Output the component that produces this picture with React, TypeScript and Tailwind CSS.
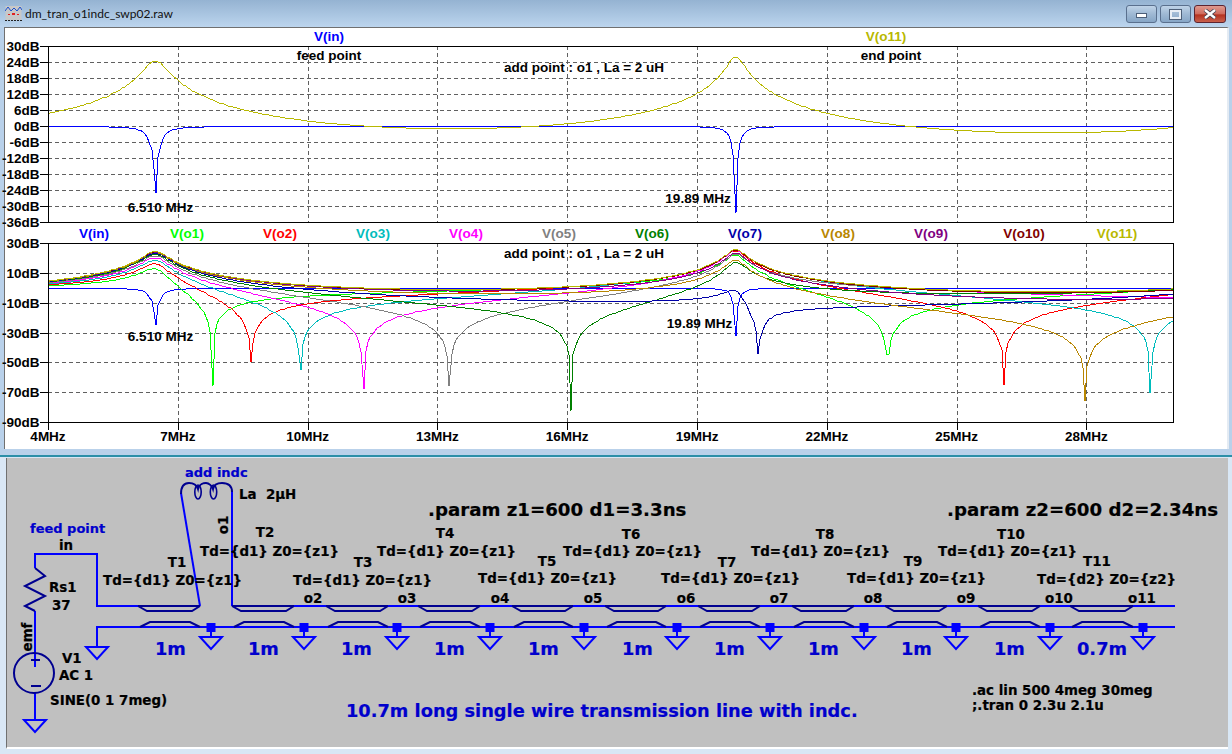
const NODES = ['in', 'o1', 'o2', 'o3', 'o4', 'o5', 'o6', 'o7', 'o8', 'o9', 'o10', 'o11']
const COLORS = ['#0000ff', '#00ff00', '#ff0000', '#00bcbc', '#ff00ff', '#808080', '#008000', '#0000a8', '#b88600', '#800080', '#800000', '#b8b800']

type C = [number, number]
const mul = (a: C, b: C): C => [a[0] * b[0] - a[1] * b[1], a[0] * b[1] + a[1] * b[0]]
const add = (a: C, b: C): C => [a[0] + b[0], a[1] + b[1]]

// the circuit in the schematic, solved backwards from the open end
const sweep = () => {
  const traces: number[][] = NODES.map(() => [])
  const freqs: number[] = []
  for (let k = 0; k < 500; k++) {
    const f = 4e6 + (k * 26e6) / 499
    const w = 2 * Math.PI * f
    let v: C = [1, 0]
    let i: C = [0, 0]
    const line = (td: number) => {
      const c = Math.cos(w * td)
      const s = Math.sin(w * td)
      const v1 = add(mul(v, [c, 0]), mul(i, [0, 600 * s]))
      const i1 = add(mul(i, [c, 0]), mul(v, [0, s / 600]))
      v = v1
      i = i1
    }
    const vals: C[] = new Array(12)
    vals[11] = v
    line(2.34e-9)
    vals[10] = v
    for (let n = 9; n >= 1; n--) {
      line(3.3e-9)
      vals[n] = v
    }
    v = add(v, mul(i, [0, w * 2e-6]))
    line(3.3e-9)
    vals[0] = v
    const vs = add(v, mul(i, [37, 0]))
    const mag = Math.hypot(vs[0], vs[1])
    vals.forEach((x, n) => traces[n].push(20 * Math.log10(Math.hypot(x[0], x[1]) / mag + 1e-7)))
    freqs.push(f)
  }
  return { traces, freqs }
}

const { traces, freqs } = sweep()

const X0 = 48
const X1 = 1173
const xOf = (f: number) => X0 + ((f - 4e6) / 26e6) * (X1 - X0)
const FREQ_TICKS = [4, 7, 10, 13, 16, 19, 22, 25, 28]

type PlotProps = {
  top: number
  bottom: number
  viewTop: number
  viewH: number
  dbTop: number
  dbStep: number
  labels: number
  show: number[]
  freqAxis?: boolean
  children: React.ReactNode
}

const Plot = ({ top, bottom, viewTop, viewH, dbTop, dbStep, labels, show, freqAxis, children }: PlotProps) => {
  const rows = Array.from({ length: labels }, (_, n) => n)
  const rowY = (n: number) => top + ((bottom - top) * n) / (labels - 1)
  const yOf = (db: number) => top + ((dbTop - db) / (dbStep * (labels - 1))) * (bottom - top)
  return (
    <svg
      className="block overflow-visible font-['Liberation_Sans'] font-bold text-[13.5px]"
      width={1222}
      height={viewH}
      viewBox={`5 ${viewTop} 1222 ${viewH}`}
    >
      {rows.slice(1, -1).map((n) => (
        <line key={n} x1={X0} x2={X1} y1={Math.round(rowY(n)) + 0.5} y2={Math.round(rowY(n)) + 0.5} stroke="#606060" strokeDasharray="4 3" shapeRendering="crispEdges" />
      ))}
      {FREQ_TICKS.slice(1).map((m) => (
        <line key={m} x1={Math.round(xOf(m * 1e6)) + 0.5} x2={Math.round(xOf(m * 1e6)) + 0.5} y1={top} y2={bottom} stroke="#606060" strokeDasharray="4 3" shapeRendering="crispEdges" />
      ))}
      {show.map((n) => (
        <polyline
          key={n}
          fill="none"
          stroke={COLORS[n]}
          shapeRendering="crispEdges"
          points={traces[n].map((db, k) => `${Math.round(xOf(freqs[k]))},${Math.round(Math.max(top, yOf(db)))}`).join(' ')}
        />
      ))}
      <rect x={X0 + 0.5} y={top + 0.5} width={X1 - X0} height={bottom - top} fill="none" stroke="#000" shapeRendering="crispEdges" />
      {rows.map((n) => (
        <g key={n}>
          <line x1={40} x2={X0} y1={Math.round(rowY(n)) + 0.5} y2={Math.round(rowY(n)) + 0.5} stroke="#000" shapeRendering="crispEdges" />
          <text x={39.5} y={rowY(n) + 5} textAnchor="end">{dbTop - n * dbStep}dB</text>
        </g>
      ))}
      {freqAxis &&
        FREQ_TICKS.map((m) => (
          <g key={m}>
            <line x1={Math.round(xOf(m * 1e6)) + 0.5} x2={Math.round(xOf(m * 1e6)) + 0.5} y1={bottom} y2={bottom + 8} stroke="#000" shapeRendering="crispEdges" />
            <text x={xOf(m * 1e6)} y={bottom + 19} textAnchor="middle">{m}MHz</text>
          </g>
        ))}
      {children}
    </svg>
  )
}

const TLINES = [[138, 200], [232, 294], [326, 388], [418, 480], [512, 573], [605, 666], [698, 760], [792, 854], [885, 947], [978, 1040], [1070, 1133]]
const GROUNDS = [211, 304, 397, 490, 584, 677, 770, 864, 956, 1050, 1143]
const TNAMES = [
  ['T1', 177, 567, 103, 585], ['T2', 265, 537, 200, 556], ['T3', 363, 567, 293, 585], ['T4', 445, 538, 377, 556],
  ['T5', 547, 566, 478, 583], ['T6', 631, 539, 563, 556], ['T7', 727, 567, 661, 583], ['T8', 825, 539, 751, 556],
  ['T9', 913, 566, 847, 583], ['T10', 1011, 539, 938, 556], ['T11', 1097, 566, 1037, 584],
] as const
const NODE_LABELS = [['o2', 313], ['o3', 407], ['o4', 500], ['o5', 593], ['o6', 686], ['o7', 779], ['o8', 873], ['o9', 966], ['o10', 1059], ['o11', 1142]] as const
const LENGTHS = [['1m', 155], ['1m', 248], ['1m', 341], ['1m', 434], ['1m', 528], ['1m', 622], ['1m', 714], ['1m', 808], ['1m', 901], ['1m', 994], ['0.7m', 1077]] as const

const Ground = ({ x, y }: { x: number; y: number }) => (
  <polygon points={`${x - 11},${y} ${x + 11},${y} ${x},${y + 12}`} fill="none" stroke="#0000ff" strokeWidth={2} />
)

const Schematic = () => (
  <svg
    className="block font-['DejaVu_Sans'] font-bold text-[13.4px]"
    width={1221}
    height={290}
    viewBox="7 458 1221 290"
    fill="none"
  >
    {/* wires */}
    <g stroke="#0000ff" strokeWidth={2}>
      <polyline points="35,568 35,554 97,554 97,606 138,606" />
      <line x1={232} y1={606} x2={1175} y2={606} />
      <polyline points="97,647 97,627 1175,627" />
      <line x1={200} y1={606} x2={181} y2={493} />
      <line x1={232} y1={606} x2={232} y2={491} />
      <line x1={35} y1={611} x2={35} y2={667} />
      <line x1={35} y1={693} x2={35} y2={720} />
    </g>
    <Ground x={97} y={647} />
    <Ground x={35} y={720} />
    {GROUNDS.map((x) => (
      <g key={x}>
        <line x1={x} y1={628} x2={x} y2={637} stroke="#0000ff" strokeWidth={2} />
        <rect x={x - 4.5} y={623} width={9} height={9} fill="#0000ff" />
        <Ground x={x} y={637} />
      </g>
    ))}
    {/* transmission line symbols */}
    <g stroke="#000090" strokeWidth={2}>
      {TLINES.map(([a, b]) => (
        <g key={a}>
          <line x1={a} y1={606} x2={b} y2={606} />
          <polyline points={`${a},606 ${a + 9},611 ${b - 8},611 ${b},606`} />
          <polyline points={`${a + 2},627 ${a + 12},622 ${b - 10},622 ${b},627`} />
        </g>
      ))}
      {/* resistor */}
      <polyline points="35,568 45,576 25,586 45,596 25,606 35,611" />
      {/* source */}
      <circle cx={34} cy={673} r={20} />
      <line x1={31} y1={660} x2={40} y2={660} />
      <line x1={31} y1={686} x2={41} y2={686} />
      {/* inductor */}
      <path d="M181 494 C181 487 184 483 189 483 C194 483 197 486 198 489 C199 484 204 483 206 483 C209 483 212 486 213 489 C214 484 219 483 222 483 C228 483 232 486 232 492" />
      <ellipse cx={198} cy={492} rx={3.2} ry={7} strokeWidth={1.6} />
      <ellipse cx={213.5} cy={492} rx={3.2} ry={7} strokeWidth={1.6} />
    </g>
    {/* labels */}
    <g className="fill-black" stroke="#000" strokeWidth={0.2}>
      {TNAMES.map(([name, cx, cy, tx, ty]) => (
        <g key={name}>
          <text x={cx} y={cy} textAnchor="middle">{name}</text>
          <text x={tx} y={ty}>{name === 'T11' ? 'Td={d2} Z0={z2}' : 'Td={d1} Z0={z1}'}</text>
        </g>
      ))}
      {NODE_LABELS.map(([name, x]) => (
        <text key={name} x={x} y={603} textAnchor="middle">{name}</text>
      ))}
      <text x={66} y={550} textAnchor="middle">in</text>
      <text x={239} y={499} className="whitespace-pre">La  2µH</text>
      <text x={49} y={592}>Rs1</text>
      <text x={52} y={610}>37</text>
      <text x={62} y={663}>V1</text>
      <text x={59} y={680}>AC 1</text>
      <text x={50} y={705}>SINE(0 1 7meg)</text>
      <text x={972} y={695}>.ac lin 500 4meg 30meg</text>
      <text x={972} y={710}>;.tran 0 2.3u 2.1u</text>
      <text transform="translate(228 525) rotate(-90)" textAnchor="middle">o1</text>
      <text transform="translate(32 637) rotate(-90)" textAnchor="middle">emf</text>
      <text x={428} y={516} className="text-[18.2px]">.param z1=600 d1=3.3ns</text>
      <text x={947} y={516} className="text-[18.2px]">.param z2=600 d2=2.34ns</text>
    </g>
    <g className="fill-[#0000cc]" stroke="#0000cc" strokeWidth={0.2}>
      <text x={30} y={533} className="text-[13px]">feed point</text>
      <text x={185} y={477} className="text-[13px]">add indc</text>
      <text x={346} y={717} className="text-[17.8px]">10.7m long single wire transmission line with indc.</text>
      {LENGTHS.map(([t, x]) => (
        <text key={x} x={x} y={655} className="text-[17.8px]">{t}</text>
      ))}
    </g>
  </svg>
)

const TitleIcon = () => (
  <svg width={17} height={17} viewBox="0 0 17 17" className="mr-[3px] shrink-0">
    <rect x={0.5} y={1} width={16} height={14} fill="#c8c8c8" />
    <polyline points="0,6 3,2 6,6 9,3 12,6 15,2 17,5" fill="none" stroke="#1a4fd0" />
    <rect x={3} y={9} width={2} height={1} fill="#e02020" />
    <rect x={7} y={8} width={3} height={2} fill="#e02020" />
    <rect x={12} y={9} width={2} height={1} fill="#e02020" />
    <line x1={0} y1={15.5} x2={17} y2={15.5} stroke="#222" strokeDasharray="2 1" />
  </svg>
)

export default function App() {
  return (
    <div className="w-[1232px] h-[754px] overflow-hidden flex flex-col bg-[#b9d1ea]">
      <div className="h-[27px] shrink-0 flex items-center pl-[5px] pr-[6px] bg-gradient-to-b from-[#95b3d2] to-[#bcd5ee]">
        <TitleIcon />
        <span className="font-['Lato'] text-[12px] text-[#111]">dm_tran_o1indc_swp02.raw</span>
        <div className="ml-auto flex gap-[3px] self-start pt-[5px]">
          <div className="w-[31px] h-[18px] rounded-[3px] border border-[#5a708e] flex items-end justify-center pb-[4px] bg-gradient-to-b from-[#bfd3e8] via-[#9fb9d4] to-[#87a6c6]">
            <div className="w-[11px] h-[5px] border border-[#4d5f78] bg-white" />
          </div>
          <div className="w-[31px] h-[18px] rounded-[3px] border border-[#5a708e] flex items-center justify-center bg-gradient-to-b from-[#bfd3e8] via-[#9fb9d4] to-[#87a6c6]">
            <div className="w-[11px] h-[9px] border-2 border-[#e8eef5] outline outline-1 outline-[#4d5f78]" />
          </div>
          <div className="w-[32px] h-[18px] rounded-[3px] border border-[#5c2430] flex items-center justify-center bg-[linear-gradient(#de9a90,#cf6a5c_50%,#b4321f_55%,#c8604c)]">
            <svg width={14} height={10} viewBox="0 0 14 10">
              <path d="M2 1 L12 9 M12 1 L2 9" stroke="#3d3d4d" strokeWidth={4} />
              <path d="M2 1 L12 9 M12 1 L2 9" stroke="#fff" strokeWidth={2.4} />
            </svg>
          </div>
        </div>
      </div>
      <div className="h-[422px] shrink-0 ml-[4px] mr-[3px] bg-white border-l border-t border-r-2 border-[#707070] border-r-[#e4ebf3]">
        <Plot top={46} bottom={222} viewTop={28} viewH={197} dbTop={30} dbStep={6} labels={12} show={[0, 11]}>
          <g textAnchor="middle">
            <text x={329} y={41} className="fill-[#0000ff]">V(in)</text>
            <text x={886} y={41} className="fill-[#b8b800]">V(o11)</text>
            <text x={329} y={60}>feed point</text>
            <text x={891} y={60}>end point</text>
            <text x={584} y={72}>add point : o1 , La = 2 uH</text>
            <text x={160.5} y={212}>6.510 MHz</text>
            <text x={698} y={203}>19.89 MHz</text>
          </g>
        </Plot>
        <Plot top={243} bottom={422} viewTop={225} viewH={223} dbTop={30} dbStep={20} labels={7} show={[0, 1, 2, 3, 4, 5, 6, 7, 8, 9, 10, 11]} freqAxis>
          <g textAnchor="middle">
            {NODES.map((n, k) => (
              <text key={n} x={94 + k * 93} y={238} fill={COLORS[k]}>V({n})</text>
            ))}
            <text x={584} y={258}>add point : o1 , La = 2 uH</text>
            <text x={160.5} y={341}>6.510 MHz</text>
            <text x={699.5} y={328}>19.89 MHz</text>
          </g>
        </Plot>
      </div>
      <div className="h-[6px] shrink-0" />
      <div className="flex-1 border-t-2 border-[#2b8fa8] bg-[#d9e7f5] pt-px pl-[6px] pb-[5px]">
        <div className="w-[1222px] h-[291px] bg-[#c0c0c0] border-l border-[#707070] border-b-2 border-b-white">
          <Schematic />
        </div>
      </div>
    </div>
  )
}
